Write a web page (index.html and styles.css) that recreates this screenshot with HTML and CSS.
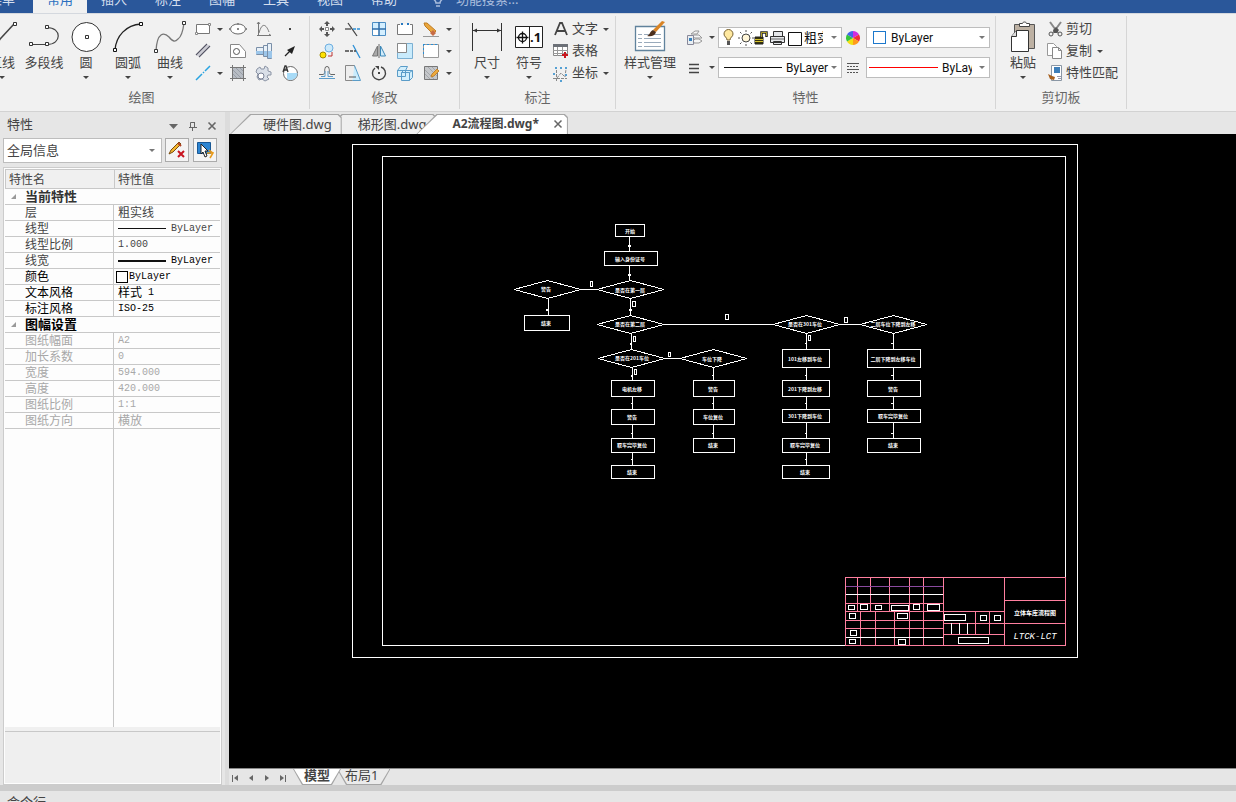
FILE: index.html
```html
<!DOCTYPE html>
<html lang="zh-CN">
<head>
    <meta charset="UTF-8">
    <meta name="viewport" content="width=device-width, initial-scale=1.0">
    <title>A2流程图.dwg</title>
    <link rel="stylesheet" href="styles.css">
</head>
<body>
    <nav class="menu-bar">
        <a class="menu-item file" href="#">菜单</a>
        <a class="menu-item active" href="#">常用</a>
        <a class="menu-item" href="#">插入</a>
        <a class="menu-item" href="#">标注</a>
        <a class="menu-item" href="#">图幅</a>
        <a class="menu-item" href="#">工具</a>
        <a class="menu-item" href="#">视图</a>
        <a class="menu-item" href="#">帮助</a>
        <a class="menu-search" href="#">
            <svg width="12" height="16" viewBox="0 0 12 16"><path d="M4 11C4 8 1 8 1 5a5 5 0 0 1 10 0c0 3-3 3-3 6zM4 14h4" fill="none" stroke="#a9bddd" stroke-width="1.5"/></svg>
            功能搜索...
        </a>
    </nav>

    <div class="ribbon">
        <!-- 绘图 -->
        <section class="group draw">
            <div class="tools">
                <button class="big">
                    <svg width="32" height="34" viewBox="0 0 32 34"><path d="M2 32L28 4" stroke="#444" stroke-width="1.5"/><path d="M27.500 2.500h3v3h-3z" fill="#fff" stroke="#333"/></svg>
                    <span>直线</span><i class="arrow"></i>
                </button>
                <button class="big">
                    <svg width="32" height="34" viewBox="0 0 32 34"><path d="M3 24.500h16c15 0 15-17 0-17" fill="none" stroke="#444" stroke-width="1.2"/><path d="M1.500 22.500h3v3h-3zM17.500 22.500h3v3h-3zM17.500 5.500h3v3h-3z" fill="#fff" stroke="#333"/></svg>
                    <span>多段线</span>
                </button>
                <button class="big">
                    <svg width="32" height="34" viewBox="0 0 32 34"><circle cx="16.500" cy="17" r="14.500" fill="#fff" stroke="#333"/><path d="M15.500 15.500h3v3h-3z" fill="#fff" stroke="#333"/></svg>
                    <span>圆</span><i class="arrow"></i>
                </button>
                <button class="big">
                    <svg width="32" height="34" viewBox="0 0 32 34"><path d="M3 30C4 16 14 5 29 4" fill="none" stroke="#222" stroke-width="1.300"/><path d="M1.500 28.500h3v3h-3zM27.500 2.500h3v3h-3z" fill="#fff" stroke="#111"/></svg>
                    <span>圆弧</span><i class="arrow"></i>
                </button>
                <button class="big">
                    <svg width="32" height="34" viewBox="0 0 32 34"><path d="M2 31C3 12 10 12 15 17c4 5 6 5 9 2 3-2 5-8 6-16" fill="none" stroke="#777" stroke-width="1.300"/><path d="M.500 29.500h3v3h-3zM28.500 1.500h3v3h-3z" fill="#fff" stroke="#333"/></svg>
                    <span>曲线</span><i class="arrow"></i>
                </button>
                <div class="small-grid draw-grid">
                    <button aria-label="矩形"><svg width="18" height="18" viewBox="0 0 18 18"><path d="M2.500 4.500h13v9h-13z" fill="#fff" stroke="#777"/><path d="M1.500 12.500h2v2h-2zM14.500 3.500h2v2h-2z" fill="#fff" stroke="#888"/></svg></button>
                    <i class="arrow"></i>
                    <button aria-label="椭圆"><svg width="18" height="18" viewBox="0 0 18 18"><ellipse cx="9" cy="9" rx="7.500" ry="5" fill="#fff" stroke="#666"/><path d="M8 8h2v2H8zM8 3h2v2H8zM0 8h2v2H0zM16 8h2v2h-2z" fill="#888"/></svg></button>
                    <button aria-label="公式曲线"><svg width="18" height="18" viewBox="0 0 18 18"><path d="M2 15.500h14M3.500 2v14M2 4l1.500-2L5 4M14 14l2 1.500" fill="none" stroke="#777"/><path d="M4 13c3-11 7-9 10-1" fill="none" stroke="#777"/></svg></button>
                    <button aria-label="点"><svg width="18" height="18" viewBox="0 0 18 18"><path d="M8 8h2v2H8z" fill="#444"/></svg></button>

                    <button aria-label="平行线"><svg width="18" height="18" viewBox="0 0 18 18"><path d="M2 13L13 2M5 15L16 4" stroke="#556" stroke-width="1.200"/><path d="M3.500 14l11-11" stroke="#aab"/></svg></button>
                    <i></i>
                    <button aria-label="局部"><svg width="18" height="18" viewBox="0 0 18 18"><path d="M1.500 2.500h9l6 7v6h-15z" fill="#fff" stroke="#888"/><circle cx="7.500" cy="9.500" r="3" fill="none" stroke="#555"/></svg></button>
                    <button aria-label="轴"><svg width="18" height="18" viewBox="0 0 18 18"><path d="M1.500 5.500h7v-2h4v-2h4v15h-4v-2h-4v-2h-7z" fill="#e9f1f8" stroke="#7a8fa8"/><path d="M1 9h16v7h-4v-2H8v-2H1z" fill="#9cc6ea"/><path d="M8.500 4v10M12.500 2v14" stroke="#7a8fa8"/></svg></button>
                    <button aria-label="箭头"><svg width="18" height="18" viewBox="0 0 18 18"><path d="M4 14l6-6" stroke="#222" stroke-width="1.300"/><path d="M14 4l-3 8-5-4z" fill="#222"/></svg></button>

                    <button aria-label="中心线"><svg width="18" height="18" viewBox="0 0 18 18"><path d="M2 16l6-6M9 9l1-1M11 7l5-5" stroke="#2aa3e0" stroke-width="1.500"/></svg></button>
                    <i class="arrow"></i>
                    <button aria-label="剖面线"><svg width="18" height="18" viewBox="0 0 18 18"><path d="M3 3h12v12H3z" fill="#b7bcc3"/><path d="M3 5l10 10M3 9l6 6M6 3l9 9M10 3l5 5" stroke="#989da6"/><path d="M3.500 1v16M14.500 1v16M1 3.500h16M1 14.500h16" stroke="#777"/></svg></button>
                    <button aria-label="齿轮"><svg width="18" height="18" viewBox="0 0 18 18"><path d="M2 5l3-2 1 2 3 0 1-3 3 2 0 3 3 1v3h-3l-1 2 2 2-4 2-3-2-3 1-2-3 1-3-2-2z" fill="#d9dfe8" stroke="#8b94a5"/><circle cx="6" cy="12" r="3" fill="#fff" stroke="#7a8296"/></svg></button>
                    <button aria-label="局部放大图"><svg width="18" height="18" viewBox="0 0 18 18"><circle cx="9.500" cy="9.500" r="7" fill="#fff" stroke="#666"/><path d="M6 9h10.500a7 7 0 0 1-10.500 6z" fill="#a8dbf7"/><path d="M2 8l2-6h1l2 6M3 6h3" fill="none" stroke="#333" stroke-width="1.300"/></svg></button>
                </div>
            </div>
            <h2>绘图</h2>
        </section>

        <!-- 修改 -->
        <section class="group modify">
            <div class="tools">
                <div class="small-grid modify-grid">
                    <button aria-label="平移"><svg width="18" height="18" viewBox="0 0 18 18"><path d="M9 1l3 3h-2v2H8V4H6zM9 17l3-3h-2v-2H8v2H6zM1 9l3-3v2h2v2H4v2zM17 9l-3-3v2h-2v2h2v2z" fill="#555"/><path d="M7.500 7.500h3v3h-3z" fill="#fff" stroke="#888"/></svg></button>
                    <button aria-label="裁剪"><svg width="18" height="18" viewBox="0 0 18 18"><path d="M4 3l9 13" stroke="#444" stroke-width="1.300"/><path d="M1 9h6" stroke="#444" stroke-width="1.300"/><path d="M9 9h8" stroke="#2d8fd5" stroke-width="1.500" stroke-dasharray="3 1"/></svg></button>
                    <button aria-label="阵列"><svg width="18" height="18" viewBox="0 0 18 18"><path d="M2.500 2.500h13v13h-13z" fill="#d4efff" stroke="#4d8ec4"/><path d="M3 9h6v6H3z" fill="#fff"/><path d="M9 2v14M2 9h14" stroke="#2f6fab" stroke-width="1.500"/></svg></button>
                    <button aria-label="打断"><svg width="18" height="18" viewBox="0 0 18 18"><path d="M4 4.500H1.500v10h15v-10H14" fill="#fff" stroke="#777"/><path d="M5 3h2v2H5zM11 3h2v2h-2z" fill="#2678c0"/></svg></button>
                    <button aria-label="删除"><svg width="18" height="18" viewBox="0 0 18 18"><path d="M2 3l3 0 9 8-3 3-8-8z" fill="#e9a63d" stroke="#c07c22"/><path d="M11 10l3 3-3 3-3-3z" fill="#c66b45"/><path d="M1 16.500h16" stroke="#999"/></svg></button>
                    <i class="arrow"></i>

                    <button aria-label="平移复制"><svg width="18" height="18" viewBox="0 0 18 18"><circle cx="11" cy="6" r="4" fill="#cce9fa" stroke="#6daee0"/><circle cx="5" cy="13" r="3" fill="#ffe100" stroke="#a28b00"/><path d="M10 14h4v-4" fill="none" stroke="#b33"/></svg></button>
                    <button aria-label="延伸"><svg width="18" height="18" viewBox="0 0 18 18"><path d="M9 3l7 13" stroke="#2d8fd5" stroke-width="1.300"/><path d="M1 9h4M6 9h3M10 9h2" stroke="#444" stroke-width="1.300"/></svg></button>
                    <button aria-label="镜像"><svg width="18" height="18" viewBox="0 0 18 18"><path d="M7.500 4v10h-5z" fill="#aaa" stroke="#777"/><path d="M10.500 4v10h5z" fill="#d1ecfb" stroke="#3c88b8"/><path d="M9 2v14" stroke="#666"/></svg></button>
                    <button aria-label="缩放"><svg width="18" height="18" viewBox="0 0 18 18"><path d="M1.500 1.500h15v15h-15z" fill="#c9ebfc" stroke="#7cb0d2"/><path d="M1.500 1.500h9v9h-9z" fill="#fff" stroke="#888"/></svg></button>
                    <button aria-label="拉伸"><svg width="18" height="18" viewBox="0 0 18 18"><path d="M1.500 2.500h15v13h-15z" fill="#fff" stroke="#999"/><path d="M1 2.500h16M1.500 2v12" stroke="#2d8fd5" stroke-dasharray="2 2"/></svg></button>
                    <i class="arrow"></i>

                    <button aria-label="等距线"><svg width="18" height="18" viewBox="0 0 18 18"><path d="M1 10.500h4c3-1 1-4 2-6a2 2 0 0 1 4 0c1 2-1 5 2 6h4" fill="none" stroke="#666"/><path d="M1 14.500h16M3 12.500h4V7M10 7v5.500h5" fill="none" stroke="#5c9cc9"/></svg></button>
                    <button aria-label="拉伸面"><svg width="18" height="18" viewBox="0 0 18 18"><path d="M1.500 1.500h9v15h-9z" fill="#eee" stroke="#888"/><path d="M10.500 1.500l6 15h-8" fill="#c9ebfc" stroke="#5a9cc8"/><path d="M5 13h7" stroke="#555"/></svg></button>
                    <button aria-label="旋转"><svg width="18" height="18" viewBox="0 0 18 18"><path d="M5 4a6.500 6.500 0 1 0 6-1" fill="none" stroke="#444" stroke-width="1.400"/><path d="M5 2h4v4zM8 8h2v2H8z" fill="#444"/></svg></button>
                    <button aria-label="块"><svg width="18" height="18" viewBox="0 0 18 18"><path d="M1.500 6.500l3-4h7l-2 4zM1.500 6.500h8v6h-8zM5.500 8.500l2-2h9v7l-3 3h-8zM5.500 8.500h8v8M13.500 8.500l3-2" fill="#d3effc" stroke="#5a9cc8"/></svg></button>
                    <button aria-label="填充编辑"><svg width="18" height="18" viewBox="0 0 18 18"><path d="M2.500 2.500h13v13h-13z" fill="#c5c7ca" stroke="#777"/><path d="M3 6l9 9M3 10l5 5M6 3l9 9M10 3l5 5" stroke="#a3a6aa"/><path d="M9 13l1-3 5-5 2 2-5 5z" fill="#edaa3d" stroke="#c08330"/></svg></button>
                    <i class="arrow"></i>
                </div>
            </div>
            <h2>修改</h2>
        </section>

        <!-- 标注 -->
        <section class="group annotate">
            <div class="tools">
                <button class="big">
                    <svg width="32" height="34" viewBox="0 0 32 34"><path d="M1.500 3v28M30.500 3v28M2 10.500h28" stroke="#333"/><path d="M2 10.500l4-2v4zM30 10.500l-4-2v4z" fill="#333"/></svg>
                    <span>尺寸</span><i class="arrow"></i>
                </button>
                <button class="big">
                    <svg width="32" height="34" viewBox="0 0 32 34"><path d="M2.500 6.500h27v21h-27zM16.500 6.500v21" fill="#fff" stroke="#222"/><circle cx="9.500" cy="17.500" r="4" fill="none" stroke="#111" stroke-width="1.300"/><path d="M3.500 17.500h12M9.500 11.500v12" stroke="#111" stroke-width="1.300"/><text class="symbol-text" x="17" y="22">.1</text></svg>
                    <span>符号</span><i class="arrow"></i>
                </button>
                <div class="rows">
                    <button><svg width="18" height="18" viewBox="0 0 18 18"><path d="M3 15L8 3h2l5 12M5 11h8" fill="none" stroke="#444" stroke-width="1.800"/></svg><span>文字</span><i class="arrow"></i></button>
                    <button><svg width="18" height="18" viewBox="0 0 18 18"><path d="M1.500 2.500h14v11h-14z" fill="#fff" stroke="#888"/><path d="M1 2h15v3H1z" fill="#6c7077"/><path d="M1 8.500h15M1 11.500h15M5.500 5v9M10.500 5v9" stroke="#999"/><path d="M13 10v6M10 13h6" stroke="#c8171e" stroke-width="2"/></svg><span>表格</span></button>
                    <button><svg width="18" height="18" viewBox="0 0 18 18"><path d="M4.500 6v11M1 14.500h14M5 14l4-5 4 4 1-8" fill="none" stroke="#888" stroke-dasharray="3 1"/><path d="M3 3h2v2H3zM8 3h2v2H8zM13 3h2v2h-2zM1 9h2v2H1zM13 10h2v2h-2zM8 16h2v2H8z" fill="#56a0d3"/></svg><span>坐标</span><i class="arrow"></i></button>
                </div>
            </div>
            <h2>标注</h2>
        </section>

        <!-- 特性 -->
        <section class="group props">
            <div class="tools">
                <button class="big wide">
                    <svg width="32" height="34" viewBox="0 0 32 34"><path d="M1.500 6.500h29v24h-29z" fill="#fff" stroke="#60829c" stroke-width="1.300"/><path d="M4 14.500h4M4 18.500h4M4 22.500h4M4 26.500h4M10 14.500h17M10 18.500h17M10 22.500h17M10 26.500h17" stroke="#9ab"/><path d="M28 1l3 1-9 10-3-2z" fill="#d98324"/><path d="M19 10l3 2c-1 4-5 5-9 4 3-1 3-5 6-6z" fill="#4c2f1c"/></svg>
                    <span>样式管理</span><i class="arrow"></i>
                </button>
                <div class="prop-rows">
                    <div class="prop-row">
                        <button class="mini" aria-label="图层"><svg width="18" height="18" viewBox="0 0 18 18"><path d="M6 5l4-3h4l-2 3zM6 8l3-2h5l3 3h-7zM8 12l2-2h4l3 2-3 2H9z" fill="#f5f5f5" stroke="#999"/><path d="M2.500 6.500h6v9h-6z" fill="#e8eef2" stroke="#889"/><path d="M4 9h3v3H4z" fill="#3881bd"/></svg><i class="arrow"></i></button>
                        <div class="combo layer">
                            <svg width="80" height="18" viewBox="0 0 80 18">
                                <path d="M5 11C5 8 2 8 2 5a4.500 4.500 0 0 1 9 0c0 3-3 3-3 6z" fill="#ffe9a0" stroke="#776130"/><path d="M5 12h3v4H5z" fill="#555"/>
                                <circle cx="24" cy="9" r="4" fill="#fff6d8" stroke="#444"/><path d="M24 1v2M24 15v2M16 9h2M30 9h2M18 3l1.500 1.500M28.500 13.500L30 15M30 3l-1.500 1.500M18 15l1.500-1.500" stroke="#555"/>
                                <path d="M33 8h8v7h-8z" fill="#38340c" stroke="#222"/><path d="M33 10.500h8M33 12.500h8" stroke="#d6c22e"/><path d="M39.500 8V3.500h5V8" fill="none" stroke="#222" stroke-width="2.500"/><path d="M39.500 8V3.500h5V7" fill="none" stroke="#d6c22e" stroke-width=".8"/>
                                <path d="M51.500 7V2.500h9V7M48.500 7.500h14v6h-14zM51.500 12.500h8v3h-8z" fill="#e5e7ea" stroke="#333"/><path d="M49 10h13" stroke="#666"/>
                                <path d="M66.500 3.500h13v13h-13z" fill="#fff" stroke="#111"/>
                            </svg>
                            <select aria-label="图层名"><option>粗实线</option></select>
                        </div>
                        <button class="mini-icon" aria-label="颜色"><svg width="14" height="14" viewBox="0 0 14 14"><path d="M7 7V0a7 7 0 0 1 6 3.500z" fill="#d22be0"/><path d="M7 7l6-3.500a7 7 0 0 1 0 7z" fill="#f22b3a"/><path d="M7 7l6 3.500A7 7 0 0 1 7 14z" fill="#ff9b1a"/><path d="M7 7v7a7 7 0 0 1-6-3.500z" fill="#f2df12"/><path d="M7 7l-6 3.500a7 7 0 0 1 0-7z" fill="#35c53c"/><path d="M7 7L1 3.500A7 7 0 0 1 7 0z" fill="#4565e8"/></svg></button>
                        <div class="combo color">
                            <i class="swatch"></i>
                            <select aria-label="当前颜色"><option>ByLayer</option></select>
                        </div>
                    </div>
                    <div class="prop-row">
                        <button class="mini" aria-label="线型"><svg width="18" height="18" viewBox="0 0 18 18"><path d="M4 5.500h10M4 9.500h10M4 13.500h10" stroke="#444" stroke-width="1.300"/></svg><i class="arrow"></i></button>
                        <div class="combo linetype">
                            <i class="line"></i>
                            <select aria-label="当前线型"><option>ByLayer</option></select>
                        </div>
                        <button class="mini-icon" aria-label="线宽"><svg width="14" height="14" viewBox="0 0 14 14"><path d="M1 2.500h12M1 8.500h12" stroke="#555"/><path d="M1 5.500h12M1 11.500h12" stroke="#555" stroke-dasharray="2 1"/></svg></button>
                        <div class="combo lineweight">
                            <i class="line"></i>
                            <select aria-label="当前线宽"><option>ByLayer</option></select>
                        </div>
                    </div>
                </div>
            </div>
            <h2>特性</h2>
        </section>

        <!-- 剪切板 -->
        <section class="group clipboard">
            <div class="tools">
                <button class="big">
                    <svg width="32" height="34" viewBox="0 0 32 34"><path d="M7.500 4.500h20v24h-20z" fill="#bdb1a3" stroke="#555"/><path d="M12.500 6.500v-3h3c0-2 4-2 4 0h3v3z" fill="#fff" stroke="#444"/><path d="M4.500 16.500l5-6h12v21h-17z" fill="#fff" stroke="#333"/><path d="M4.500 16.500h5v-6" fill="#ddd" stroke="#333"/></svg>
                    <span>粘贴</span><i class="arrow"></i>
                </button>
                <div class="rows">
                    <button><svg width="18" height="18" viewBox="0 0 18 18"><path d="M4 2l8 11M15 2L7 13" stroke="#888" stroke-width="2"/><path d="M7 10l3-3 3 3-2 3H8z" fill="#555"/><circle cx="5" cy="14" r="2" fill="none" stroke="#555"/><circle cx="14" cy="14" r="2" fill="none" stroke="#555"/></svg><span>剪切</span></button>
                    <button><svg width="18" height="18" viewBox="0 0 18 18"><path d="M1.500 1.500h6l3 3v9h-9z" fill="#fff" stroke="#999"/><path d="M6.500 5.500h6l3 3v8h-9zM12.500 5.500v3h3" fill="#fff" stroke="#888"/></svg><span>复制</span><i class="arrow"></i></button>
                    <button><svg width="18" height="18" viewBox="0 0 18 18"><path d="M5.500 1.500h10v15h-10z" fill="#fff" stroke="#8a97a5"/><path d="M8 3h6v6H8z" fill="#3e7fb9"/><path d="M11 12.500h4M12 14.500h3" stroke="#99a"/><path d="M2 10l4 2 3 1-1 3-4-1z" fill="#a8601d"/></svg><span>特性匹配</span></button>
                </div>
            </div>
            <h2>剪切板</h2>
        </section>
    </div>

    <main class="workspace">
        <aside class="panel">
            <header class="panel-title">
                <h1>特性</h1>
                <button aria-label="菜单"><svg width="10" height="10" viewBox="0 0 10 10"><path d="M0 3h9L4.500 8z" fill="#666"/></svg></button>
                <button aria-label="固定"><svg width="10" height="10" viewBox="0 0 10 10"><path d="M2.500 6V1.500h4V6M1 6.500h8M4.500 7v3M6.500 1v5" fill="none" stroke="#666"/></svg></button>
                <button aria-label="关闭"><svg width="10" height="10" viewBox="0 0 10 10"><path d="M1.500 1.500l7 7M8.500 1.500l-7 7" stroke="#666" stroke-width="1.600"/></svg></button>
            </header>
            <div class="filter">
                <div class="combo info">
                    <select aria-label="信息"><option>全局信息</option></select>
                </div>
                <button aria-label="清除"><svg width="18" height="18" viewBox="0 0 18 18"><path d="M1 13l2-4 8-8 2 2-8 8z" fill="#f3b62e" stroke="#774c12"/><path d="M10 2l3 3" stroke="#b24222" stroke-width="2"/><path d="M10 10l6 6M16 10l-6 6" stroke="#c81420" stroke-width="2"/></svg></button>
                <button aria-label="拾取"><svg width="18" height="18" viewBox="0 0 18 18"><path d="M1.500 1.500h13v11h-13z" fill="#2d85d2" stroke="#195895"/><path d="M5 3l7 7H9l2 5-2 1-2-5-2 2z" fill="#fff" stroke="#222"/><path d="M11 12h6l-3 5M13 9l4 3" fill="none" stroke="#e99a19" stroke-width="1.500"/></svg></button>
            </div>
            <div class="grid-box">
                <table>
                    <thead>
                        <tr><th>特性名</th><th>特性值</th></tr>
                    </thead>
                    <tbody>
                        <tr class="section"><td colspan="2">当前特性</td></tr>
                        <tr><td>层</td><td>粗实线</td></tr>
                        <tr><td>线型</td><td><div class="line-value"><i></i><code>ByLayer</code></div></td></tr>
                        <tr><td>线型比例</td><td><code>1.000</code></td></tr>
                        <tr class="dark-value"><td>线宽</td><td><div class="line-value thick"><i></i><code>ByLayer</code></div></td></tr>
                        <tr class="dark"><td>颜色</td><td><div class="color-value"><i></i><code>ByLayer</code></div></td></tr>
                        <tr class="dark"><td>文本风格</td><td>样式<code> 1</code></td></tr>
                        <tr class="dark"><td>标注风格</td><td><code>ISO-25</code></td></tr>
                        <tr class="section dark"><td colspan="2">图幅设置</td></tr>
                        <tr class="off"><td>图纸幅面</td><td><code>A2</code></td></tr>
                        <tr class="off"><td>加长系数</td><td><code>0</code></td></tr>
                        <tr class="off"><td>宽度</td><td><code>594.000</code></td></tr>
                        <tr class="off"><td>高度</td><td><code>420.000</code></td></tr>
                        <tr class="off"><td>图纸比例</td><td><code>1:1</code></td></tr>
                        <tr class="off"><td>图纸方向</td><td>横放</td></tr>
                    </tbody>
                </table>
                <div class="grid-rest"></div>
                <div class="grid-hint"></div>
            </div>
        </aside>

        <section class="document">
            <div class="doc-tabs">
                <a class="doc-tab first" href="#">硬件图.dwg</a>
                <a class="doc-tab" href="#">梯形图.dwg</a>
                <a class="doc-tab current" href="#">A2流程图.dwg*<svg width="10" height="10" viewBox="0 0 10 10"><path d="M1.500 1.500l7 7M8.500 1.500l-7 7" stroke="#666" stroke-width="1.500"/></svg></a>
            </div>

            <div class="canvas">
                <svg viewBox="229 134 1007 634" preserveAspectRatio="xMinYMin meet" shape-rendering="crispEdges">
                    <!-- 图框 -->
                    <g class="wire">
                        <path d="M352.500 144.500H1077.500V657.500H352.500z"/>
                        <path d="M845 645.500H382.500V156.500H1065.500V577"/>
                    </g>

                    <!-- 连线 -->
                    <g class="wire">
                        <path d="M629.500 237V251M629.500 266V280M630.500 298V315M631.500 333V349M632.500 367V380"/>
                        <path d="M581 289.500H597M548.500 298V315M664 324.500H773M665 358.500H680M840 324.500H861"/>
                        <path d="M632.500 397V409M632.500 425V438M632.500 453V465"/>
                        <path d="M713.500 367V380M713.500 397V409M713.500 425V438"/>
                        <path d="M806.500 333V349M806.500 368V380M806.500 397V409M806.500 423V438M806.500 453V465"/>
                        <path d="M893.500 333V349M893.500 368V380M893.500 397V409M893.500 423V438"/>
                        <path d="M590.500 281.500h2v5h-2zM632.500 301.500h3v5h-3zM633.500 336.500h2v5h-2zM634.500 369.500h2v5h-2zM668.500 352.500h2v4h-2zM725.500 314.500h3v5h-3zM844.500 317.500h3v5h-3zM808.500 335.500h2v5h-2z"/>
                    </g>
                    <g class="tip">
                        <path d="M628 245h3v2h-1v2h-1zM628 274h3v2h-1v2h-1zM629 309h3v2h-1v2h-1zM546 309h3v4h-1v-2h-2zM630 343h2v2h-2zM631 375h2v2h-2z"/>
                        <path d="M631 403h2v1h-2zM631 433h2v1h-2zM631 459h2v1h-2zM712 375h2v1h-2zM712 403h2v1h-2zM712 433h2v1h-2z"/>
                        <path d="M805 343h2v1h-2zM805 375h2v1h-2zM805 403h2v1h-2zM805 433h2v1h-2zM805 459h2v1h-2z"/>
                        <path d="M891 343h3v3h-1v-2h-2zM891 375h3v3h-1v-2h-2zM891 403h3v3h-1v-2h-2zM891 433h3v3h-1v-2h-2z"/>
                    </g>

                    <!-- 判断框 -->
                    <g class="wire">
                        <path d="M514 289.500L547.500 280.500L581 289.500L547.500 298.500z"/>
                        <path d="M597 289.500L630.500 280.500L664 289.500L630.500 298.500z"/>
                        <path d="M597 324.500L630.500 315.500L664 324.500L630.500 333.500z"/>
                        <path d="M598 358.500L631.500 349.500L665 358.500L631.500 367.500z"/>
                        <path d="M680 358.500L713.500 349.500L747 358.500L713.500 367.500z"/>
                        <path d="M773 324.500L806.500 315.500L840 324.500L806.500 333.500z"/>
                        <path d="M860 324.500L893.500 315.500L927 324.500L893.500 333.500z"/>
                    </g>

                    <!-- 处理框 -->
                    <g class="wire">
                        <path d="M615.500 224.500h29v12h-29zM604.500 251.500h53v14h-53zM524.500 315.500h45v15h-45z"/>
                        <path d="M611.500 380.500h43v16h-43zM611.500 409.500h43v15h-43zM611.500 438.500h43v14h-43zM611.500 465.500h43v13h-43z"/>
                        <path d="M693.500 380.500h41v16h-41zM693.500 409.500h41v15h-41zM693.500 438.500h41v14h-41z"/>
                        <path d="M782.500 349.500h47v18h-47zM782.500 380.500h47v16h-47zM782.500 409.500h47v13h-47zM782.500 438.500h47v14h-47zM782.500 465.500h47v13h-47z"/>
                        <path d="M867.500 349.500h53v18h-53zM867.500 380.500h53v16h-53zM867.500 409.500h53v13h-53zM867.500 438.500h53v14h-53z"/>
                    </g>
                    <g class="label">
                        <text x="630" y="233">开始</text>
                        <text x="630" y="261">输入身份证号</text>
                        <text x="546" y="291">警告</text>
                        <text x="630" y="292">是否在第一层</text>
                        <text x="546" y="325">结束</text>
                        <text x="630" y="326">是否在第二层</text>
                        <text x="632" y="360">是否在201车位</text>
                        <text x="712" y="361">车位下降</text>
                        <text x="632" y="391">电机左移</text>
                        <text x="632" y="419">警告</text>
                        <text x="632" y="447">取车完毕复位</text>
                        <text x="632" y="474">结束</text>
                        <text x="713" y="391">警告</text>
                        <text x="713" y="419">车位复位</text>
                        <text x="713" y="447">结束</text>
                        <text x="805" y="326">是否在301车位</text>
                        <text x="893" y="326">二层车位下降到左移</text>
                        <text x="805" y="361">101左移到车位</text>
                        <text x="805" y="391">201下降到左移</text>
                        <text x="805" y="418">301下降到车位</text>
                        <text x="805" y="447">取车完毕复位</text>
                        <text x="805" y="474">结束</text>
                        <text x="893" y="361">二层下降到左移车位</text>
                        <text x="893" y="391">警告</text>
                        <text x="893" y="418">取车完毕复位</text>
                        <text x="893" y="447">结束</text>
                    </g>

                    <!-- 标题栏 -->
                    <g class="pink">
                        <path d="M845.500 577.500H1065.500V645.500H845.500z"/>
                        <path d="M857.500 577V611M870.500 577V611M889.500 577V611M909.500 577V645M923.500 577V645M943.500 577V645M1004.500 577V645"/>
                        <path d="M860.500 611V645M875.500 611V645M894.500 611V645M975.500 611V634M989.500 611V634"/>
                        <path d="M845 603.500H943M845 611.500H1004M845 620.500H943M845 628.500H943M1004 600.500H1065M943 623.500H1065M943 634.500H1004"/>
                    </g>
                    <path class="purple" d="M846 586.500H943"/>
                    <g class="wire">
                        <path d="M846 594.500H943M846 637.500H943M951.500 623V634M959.500 623V634M967.500 623V634"/>
                        <path d="M848.500 605.500h6v4h-6zM860.500 604.500h7v5h-7zM875.500 605.500h6v4h-6zM891.500 605.500h17v5h-17zM913.500 604.500h6v5h-6zM927.500 604.500h12v6h-12z"/>
                        <path d="M849.500 613.500h6v5h-6zM897.500 613.500h10v5h-10zM850.500 630.500h6v5h-6zM849.500 639.500h6v4h-6zM898.500 639.500h7v5h-7z"/>
                        <path d="M944.500 614.500h21v6h-21zM980.500 615.500h6v5h-6zM994.500 615.500h6v5h-6zM958.500 637.500h30v6h-30z"/>
                    </g>
                    <text class="drawing-name" x="1035" y="615">立体车库流程图</text>
                    <text class="drawing-code" x="1035" y="639">LTCK-LCT</text>
                </svg>
            </div>

            <div class="sheet-bar">
                <button aria-label="第一页"><svg width="8" height="8" viewBox="0 0 8 8"><path d="M1.500 1v7" stroke="#666"/><path d="M7 1v6L3 4z" fill="#666"/></svg></button>
                <button aria-label="上一页"><svg width="8" height="8" viewBox="0 0 8 8"><path d="M6 1v6L2 4z" fill="#666"/></svg></button>
                <button aria-label="下一页"><svg width="8" height="8" viewBox="0 0 8 8"><path d="M2 1v6l4-3z" fill="#666"/></svg></button>
                <button aria-label="最后一页"><svg width="8" height="8" viewBox="0 0 8 8"><path d="M6.500 1v7" stroke="#666"/><path d="M1 1v6l4-3z" fill="#666"/></svg></button>
                <a class="sheet current" href="#">模型</a>
                <a class="sheet" href="#">布局1</a>
            </div>
        </section>
    </main>

    <footer class="command">命令行</footer>
</body>
</html>
```

FILE: styles.css
```css
* {
    box-sizing: border-box;
}
body {
    margin: 0;
    height: 100vh;
    display: flex;
    flex-direction: column;
    overflow: hidden;
    background-color: #e6e6e6;
    color: #444;
    font-family: "Noto Sans", "Noto Sans CJK SC", sans-serif;
    font-size: 13px;
    line-height: 18px;
}
button {
    padding: 0;
    border: none;
    background: none;
    color: inherit;
    font: inherit;
}
a {
    color: inherit;
    text-decoration: none;
}
h1, h2 {
    margin: 0;
    font-size: 13px;
    font-weight: normal;
}
svg {
    display: block;
    flex: none;
}
.arrow {
    width: 0;
    height: 0;
    border: 3px solid transparent;
    border-top-color: #444;
    border-bottom: none;
}

/* menu bar */
.menu-bar {
    flex: none;
    display: flex;
    align-items: flex-end;
    height: 13px;
    overflow: hidden;
    background-color: #2a579a;
    color: #d5dfee;
}
.menu-item {
    width: 54px;
    padding-bottom: 5px;
    text-align: center;
}
.menu-item.file {
    width: 33px;
    padding-right: 18px;
    direction: rtl;
    white-space: nowrap;
}
.menu-item.active {
    background-color: #f1f1f1;
    color: #2a6fc0;
}
.menu-search {
    display: flex;
    align-items: flex-end;
    gap: 12px;
    margin-left: 21px;
    padding-bottom: 5px;
    color: #a9bddd;
}

/* ribbon */
.ribbon {
    flex: none;
    display: flex;
    height: 99px;
    border-top: 1px solid #d4d8de;
    border-bottom: 1px solid #d2d2d2;
    background-color: #f1f1f1;
}
.group {
    flex: none;
    margin: 2px 0;
    border-right: 1px solid #d6d6d6;
}
.group h2 {
    margin-top: 4px;
    text-align: center;
    color: #666;
}
.tools {
    display: flex;
    height: 68px;
}
.draw {
    width: 310px;
}
.draw h2 {
    padding-right: 26px;
}
.draw .tools {
    margin-left: -19px;
}
.modify {
    width: 150px;
}
.annotate {
    width: 156px;
}
.props {
    width: 380px;
}
.clipboard {
    width: 131px;
}
.modify .tools,
.props .tools {
    padding-left: 4px;
}
.annotate .tools,
.clipboard .tools {
    padding-left: 6px;
}
.big {
    display: flex;
    flex-direction: column;
    align-items: center;
    flex: none;
    width: 42px;
    padding-top: 4px;
    white-space: nowrap;
}
.big.wide {
    width: 60px;
}
.big span {
    margin-top: -1px;
}
.big .arrow {
    margin-top: 5px;
}
.symbol-text {
    font: bold 13px "Open Sans", sans-serif;
    fill: #111;
}
.small-grid {
    display: grid;
    grid-auto-rows: 22px;
    align-items: center;
    justify-items: center;
    padding-top: 2px;
}
.draw-grid {
    grid-template-columns: 24px 10px 26px 26px 26px;
}
.modify-grid {
    grid-template-columns: repeat(5, 26px) 9px;
}
.rows {
    display: flex;
    flex-direction: column;
    padding: 2px 0 0 2px;
}
.rows button {
    display: flex;
    align-items: center;
    gap: 2px;
    height: 22px;
}
.rows span {
    padding-bottom: 2px;
}
.rows .arrow {
    margin-left: 3px;
}

.prop-rows {
    display: flex;
    flex-direction: column;
    gap: 9px;
    padding: 11px 0 0 5px;
}
.prop-row {
    display: flex;
    align-items: center;
}
.mini {
    display: flex;
    align-items: center;
    gap: 6px;
    width: 33px;
}
.mini-icon {
    width: 24px;
    padding-left: 4px;
}

/* combo boxes */
.combo {
    display: flex;
    align-items: center;
    width: 124px;
    height: 21px;
    padding: 0 4px 0 5px;
    border: 1px solid #bdbdbd;
    background-color: #fff;
}
.combo::after {
    content: "";
    flex: none;
    border: 3px solid transparent;
    border-top-color: #777;
    border-bottom: none;
}
.combo select {
    flex: 1;
    min-width: 0;
    height: 19px;
    padding: 0;
    border: none;
    background: none;
    appearance: none;
    color: #111;
    font-family: Roboto, "Noto Sans CJK SC", sans-serif;
    font-size: 12px;
    overflow: hidden;
    text-overflow: clip;
}
.combo.layer {
    padding-left: 3px;
}
.combo.layer select {
    margin: 0 8px 0 2px;
    font-size: 13px;
}
.swatch {
    width: 13px;
    height: 13px;
    margin: 0 5px 0 1px;
    border: 1px solid #1c78cc;
}
.combo .line {
    flex: none;
    width: 58px;
    height: 1px;
    margin-right: 4px;
    background-color: #111;
}
.combo.lineweight {
    padding-left: 2px;
}
.combo.lineweight .line {
    width: 69px;
    background-color: #f00;
}
.combo.lineweight select {
    margin-right: 7px;
}

/* workspace */
.workspace {
    flex: 1;
    min-height: 0;
    display: flex;
    border-bottom: 6px solid #ccc;
}
.panel {
    flex: none;
    display: flex;
    flex-direction: column;
    width: 229px;
    padding: 2px 7px 0 3px;
    border-right: 4px solid #dcdcdc;
}
.panel-title {
    display: flex;
    align-items: center;
    gap: 9px;
    height: 24px;
    padding: 0 1px 0 4px;
}
.panel-title h1 {
    flex: 1;
    padding-bottom: 4px;
}
.filter {
    display: flex;
    gap: 4px;
    padding-bottom: 4px;
}
.filter .combo {
    width: 159px;
    height: 25px;
    margin-right: -1px;
    padding: 0 6px 0 3px;
}
.filter select {
    color: #444;
    font-size: 13px;
}
.filter button {
    display: flex;
    align-items: center;
    justify-content: center;
    width: 24px;
    height: 24px;
    border: 1px solid #ababab;
    background-color: #f4f4f4;
}
.grid-box {
    flex: 1;
    display: flex;
    flex-direction: column;
    width: 219px;
    padding: 1px;
    border: 1px solid #ccc;
    background-color: #fdfdfd;
}
table {
    width: 100%;
    border-spacing: 0;
    table-layout: fixed;
    font-size: 12px;
    line-height: 15px;
}
th {
    height: 20px;
    padding: 0 0 0 3px;
    border: 1px solid #c8c8c8;
    border-right-width: 0;
    background-color: #f0f0f0;
    font-weight: normal;
    text-align: left;
}
th:first-child {
    width: 109px;
}
td {
    height: 16px;
    padding: 0 0 0 4px;
    border-bottom: 1px solid #c8c8c8;
    white-space: nowrap;
}
td:first-child {
    padding-left: 20px;
    border-right: 1px solid #c8c8c8;
}
.section td:first-child {
    border-right: none;
    color: #333;
    font-size: 13px;
    font-weight: bold;
}
.section td::before {
    content: "";
    float: left;
    margin: 5px 0 0 -14px;
    border-bottom: 5px solid #999;
    border-left: 5px solid transparent;
}
.dark td,
.section.dark td:first-child {
    color: #000;
}
.dark-value td:last-child {
    color: #000;
}
.off td {
    color: #a8a8a8;
}
code {
    display: inline-block;
    height: 15px;
    vertical-align: top;
    font-family: "Liberation Mono", monospace;
    font-size: 10px;
    white-space: pre;
}
.line-value,
.color-value {
    display: flex;
    align-items: center;
}
.line-value i {
    width: 48px;
    height: 1px;
    margin-right: 5px;
    background-color: #111;
}
.line-value.thick i {
    height: 2px;
}
.color-value i {
    width: 12px;
    height: 12px;
    margin: 0 1px 0 -2px;
    border: 1px solid #000;
}
.grid-rest {
    flex: 1;
    width: 109px;
    border-right: 1px solid #c8c8c8;
}
.grid-hint {
    height: 56px;
    background: linear-gradient(#f0f0f0 4px, #c8c8c8 4px, #c8c8c8 5px, #efefef 5px);
}

/* drawing area */
.document {
    flex: 1;
    min-width: 0;
    display: flex;
    flex-direction: column;
}
.doc-tabs {
    display: flex;
    align-items: flex-end;
    height: 22px;
    border-left: 1px solid #dcdcdc;
}
.doc-tab {
    position: relative;
    z-index: 1;
    display: flex;
    align-items: center;
    height: 20px;
    margin-left: -20px;
    padding: 0 10px 0 36px;
    background-color: #a5a5a5;
    clip-path: polygon(0 100%, 20px 0, calc(100% - 3px) 0, 100% 3px, 100% 100%);
}
.doc-tab::before {
    content: "";
    position: absolute;
    z-index: -1;
    inset: 1px 1px 0 1px;
    background-color: #efefef;
    clip-path: polygon(0 100%, 20px 0, calc(100% - 3px) 0, 100% 3px, 100% 100%);
}
.doc-tab.first {
    z-index: 2;
    margin-left: 0;
    padding-left: 33px;
}
.doc-tab.current {
    z-index: 3;
    padding: 0 5px 0 36px;
    font-size: 12px;
    font-weight: bold;
}
.doc-tab.current::before {
    background-color: #fff;
}
.doc-tab svg {
    margin-left: 14px;
}
.canvas {
    flex: 1;
    min-height: 0;
    background-color: #000;
}
.canvas svg {
    width: 100%;
    height: 100%;
}
.wire {
    fill: none;
    stroke: #fff;
    stroke-linejoin: bevel;
}
.pink {
    fill: none;
    stroke: #ff7f9f;
}
.purple {
    stroke: #8a4a9f;
}
.tip {
    fill: #fff;
}
.label {
    fill: #fff;
    font-family: "Noto Sans CJK SC", sans-serif;
    font-size: 5px;
    font-weight: bold;
    text-anchor: middle;
}
.drawing-name {
    fill: #fff;
    font-family: "Noto Sans CJK SC", sans-serif;
    font-size: 6px;
    font-weight: bold;
    text-anchor: middle;
}
.drawing-code {
    fill: #fff;
    font-family: "Liberation Mono", monospace;
    font-size: 9px;
    font-style: italic;
    text-anchor: middle;
}

/* sheet tabs */
.sheet-bar {
    display: flex;
    align-items: flex-start;
    height: 17px;
    padding-left: 2px;
    border-top: 1px solid #888;
}
.sheet-bar button {
    width: 16px;
    padding-top: 5px;
}
.sheet {
    position: relative;
    z-index: 1;
    height: 16px;
    margin-left: -4px;
    padding: 0 12px 0 8px;
    line-height: 13px;
    background-color: #a5a5a5;
    clip-path: polygon(0 0, 100% 0, calc(100% - 9px) 100%, 9px 100%);
}
.sheet::before {
    content: "";
    position: absolute;
    z-index: -1;
    inset: 0 1px 1px 1px;
    background-color: #ebebeb;
    clip-path: polygon(0 0, 100% 0, calc(100% - 9px) 100%, 9px 100%);
}
.sheet.current {
    z-index: 2;
    margin-left: -2px;
    padding: 0 11px;
    font-weight: bold;
}
.sheet.current::before {
    background-color: #fff;
}

.command {
    flex: none;
    height: 11px;
    padding: 2px 7px 0;
    overflow: hidden;
}
```
